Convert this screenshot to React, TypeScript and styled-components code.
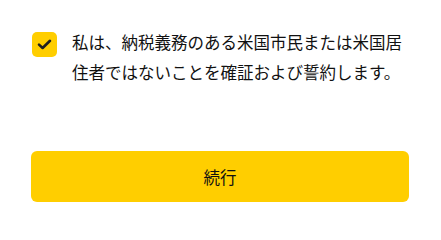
import React, { useState } from "react";
import styled, { createGlobalStyle } from "styled-components";

const Global = createGlobalStyle`
  html, body { margin: 0; padding: 0; background: #ffffff; }
  body { font-family: "Noto Sans CJK JP", "Noto Sans", sans-serif; color: #1a1a1a; }
`;

const Page = styled.div`
  width: 441px;
  box-sizing: border-box;
  padding: 28px 32px 0 31px;
  display: flex;
  flex-direction: column;
`;

const Row = styled.label`
  display: flex;
  align-items: flex-start;
  gap: 15px;
  cursor: pointer;
`;

const Box = styled.span<{ $checked: boolean }>`
  flex: none;
  width: 25px;
  height: 25px;
  margin-top: 4px;
  margin-left: 1px;
  border-radius: 5px;
  box-sizing: border-box;
  background: ${(p) => (p.$checked ? "#FFCE00" : "#ffffff")};
  border: ${(p) => (p.$checked ? "none" : "2px solid #999")};
  display: flex;
  align-items: center;
  justify-content: center;
`;

const Statement = styled.p`
  margin: 0;
  font-size: 16.5px;
  line-height: 29.6px;
  color: #111111;
`;

const Continue = styled.button`
  margin-top: 64px;
  height: 51px;
  width: 100%;
  border: none;
  border-radius: 6px;
  background: #FFCE00;
  color: #111111;
  font-family: "Noto Sans CJK JP", "Noto Sans", sans-serif;
  font-size: 16.5px;
  cursor: pointer;
`;

export default function App() {
  const [checked, setChecked] = useState(true);
  return (
    <>
      <Global />
      <Page>
        <Row onClick={() => setChecked((c) => !c)}>
          <Box $checked={checked}>
            {checked && (
              <svg width="15" height="15" viewBox="0 0 15 15" fill="none">
                <path d="M2 7.6 L5.6 11 L13 3.8" stroke="#1f1f1f" strokeWidth="2.6" strokeLinecap="round" strokeLinejoin="round" />
              </svg>
            )}
          </Box>
          <Statement>私は、納税義務のある米国市民または米国居住者ではないことを確証および誓約します。</Statement>
        </Row>
        <Continue>続行</Continue>
      </Page>
    </>
  );
}
